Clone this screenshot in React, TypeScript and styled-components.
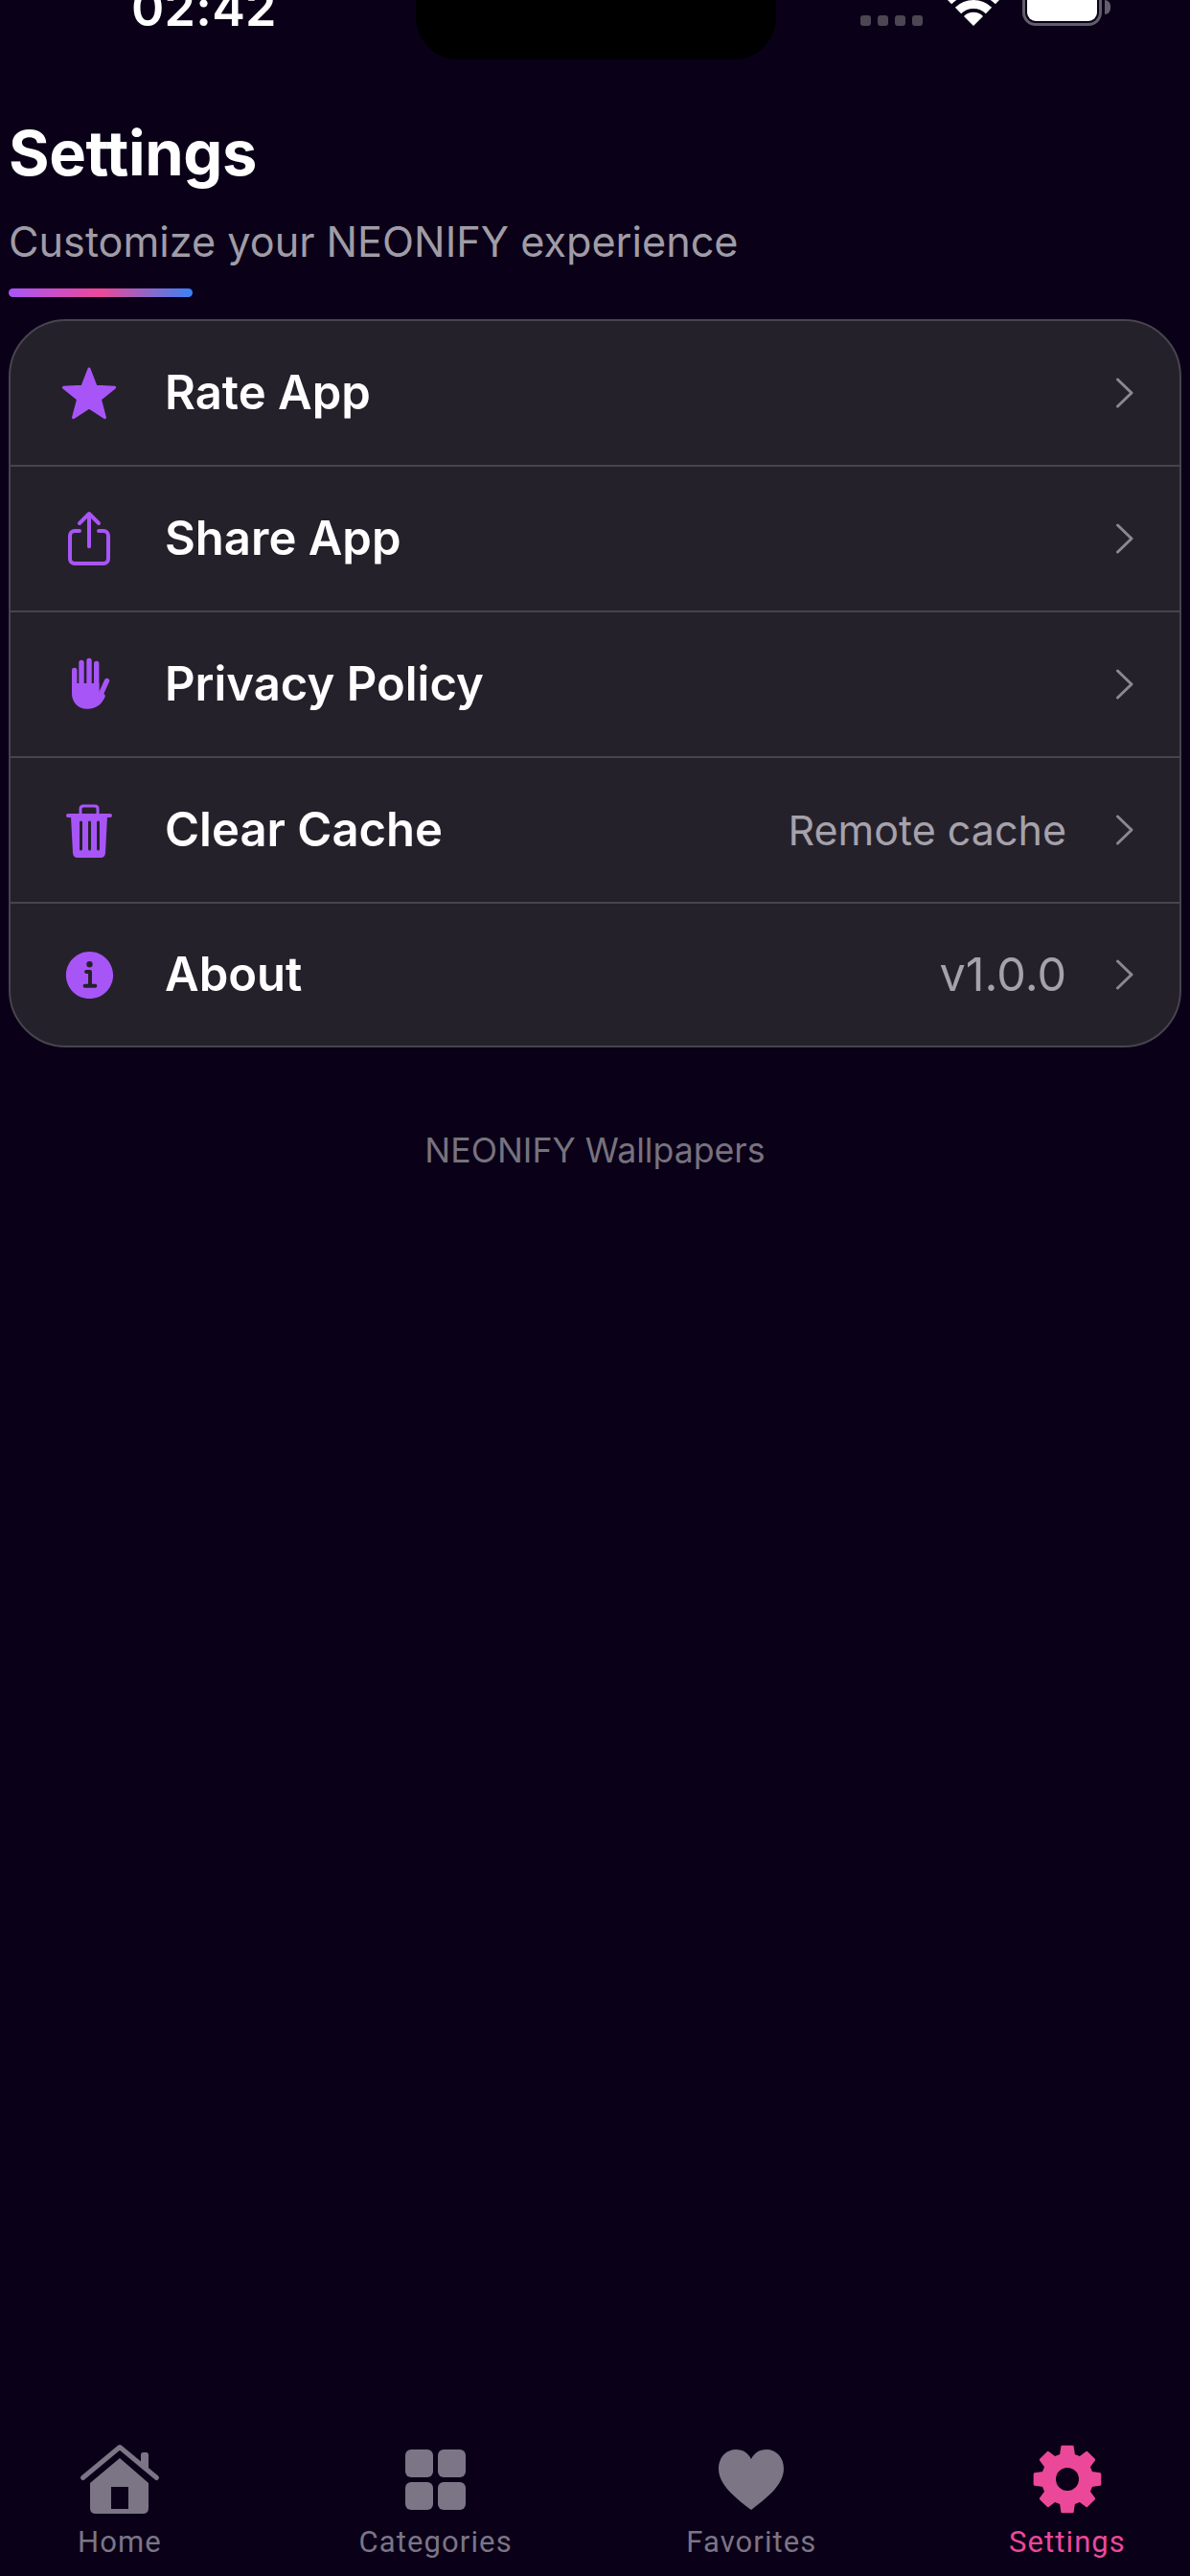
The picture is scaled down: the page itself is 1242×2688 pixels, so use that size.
import React from 'react'
import styled, { createGlobalStyle } from 'styled-components'
import { IoInformationCircle, IoShareOutline } from 'react-icons/io5'

const Colors = {
  BG: '#0a0018',
  CARD: '#25212b',
  LINE: '#47444e',
  PURPLE: '#a855f7',
  PINK: '#ec4899',
  MUTED: '#7b7585',
  VALUE: '#a5a2ab'
}

const GlobalStyle = createGlobalStyle`
  html, body {
    margin: 0;
    padding: 0;
    background: ${Colors.BG};
  }
  * {
    box-sizing: border-box;
  }
`

const Page = styled.div`
  position: relative;
  width: 1242px;
  height: 2688px;
  overflow: hidden;
  display: flex;
  flex-direction: column;
  background: ${Colors.BG};
  font-family: Inter, 'Liberation Sans', sans-serif;
  color: #fff;
`

const StatusBar = styled.div`
  height: 27px;
  display: flex;
  align-items: flex-end;
  padding-left: 137px;
`

const Time = styled.span`
  font-size: 52px;
  font-weight: 600;
  line-height: 36px;
  width: 761px;
  flex: none;
  letter-spacing: 0.3px;
`

const Dots = styled.div`
  display: flex;
  gap: 7px;
  width: 90px;
  flex: none;
`

const Dot = styled.i`
  display: block;
  width: 11px;
  height: 11px;
  border-radius: 3px;
  background: #4b4652;
`

const Wifi = styled.svg`
  display: block;
  flex: none;
  width: 56px;
  height: 56px;
  margin-right: 23px;
`

const Battery = styled.div`
  position: relative;
  flex: none;
  width: 83px;
  height: 60px;
  border: 3px solid #625d6a;
  border-radius: 14px;
  padding: 2px;
  &::before {
    content: '';
    display: block;
    height: 100%;
    background: #fff;
    border-radius: 9px;
  }
  &::after {
    content: '';
    position: absolute;
    right: -12px;
    top: 30px;
    width: 6px;
    height: 15px;
    border-radius: 0 6px 6px 0;
    background: #625d6a;
  }
`

const Notch = styled.div`
  position: absolute;
  left: 434px;
  top: -20px;
  width: 376px;
  height: 82px;
  background: #000;
  border-radius: 0 0 44px 44px;
`

const Main = styled.main`
  flex: 1;
  padding: 97px 9px 0;
`

const Title = styled.h1`
  margin: 0;
  font-size: 65px;
  line-height: 72px;
  font-weight: 700;
  letter-spacing: -0.4px;
`

const Subtitle = styled.p`
  margin: 30px 0 0;
  font-size: 43.2px;
  line-height: 52px;
  font-weight: 400;
  color: #a09ca6;
`

const Accent = styled.div`
  width: 192px;
  height: 9px;
  margin-top: 23px;
  border-radius: 5px;
  background: linear-gradient(90deg, #a855f7 0%, #ec4899 50%, #3b82f6 100%);
`

const Card = styled.section`
  margin-top: 23px;
  border: 2px solid ${Colors.LINE};
  border-radius: 60px;
  background: ${Colors.CARD};
  overflow: hidden;
`

const Row = styled.div`
  height: 152px;
  display: flex;
  align-items: center;
  padding: 0 47px 0 52px;
  border-bottom: 2px solid ${Colors.LINE};
  &:last-child {
    height: 148px;
    border-bottom: 0;
  }
`

const IconSlot = styled.div`
  width: 60px;
  flex: none;
  display: flex;
  justify-content: center;
  color: ${Colors.PURPLE};
  margin-right: 49px;
  svg {
    flex: none;
  }
`

const Label = styled.span`
  flex: 1;
  font-size: 49px;
  font-weight: 600;
  line-height: 60px;
`

const Value = styled.span<{ $big?: boolean }>`
  font-size: ${(p) => (p.$big ? 48.5 : 43)}px;
  line-height: 54px;
  color: ${Colors.VALUE};
  margin-right: 51px;
`

const Chevron = styled.svg`
  display: block;
  flex: none;
  width: 20px;
  height: 32px;
`

const Footer = styled.p`
  margin: 85px 0 0;
  text-align: center;
  font-size: 35.7px;
  line-height: 44px;
  color: #77727e;
`

const TabBar = styled.nav`
  display: flex;
  justify-content: space-between;
  padding: 0 3px 17px 0;
`

const Tab = styled.div<{ $active?: boolean }>`
  width: 250px;
  display: flex;
  flex-direction: column;
  align-items: center;
  color: ${(p) => (p.$active ? Colors.PINK : Colors.MUTED)};
`

const TabIcon = styled.div`
  height: 76px;
  display: flex;
  align-items: center;
  justify-content: center;
`

const TabLabel = styled.span`
  margin-top: 10px;
  font-family: Roboto, 'Liberation Sans', sans-serif;
  font-size: 31px;
  line-height: 36px;
  letter-spacing: 1.1px;
`

const polar = (r: number, deg: number, c: number) => {
  const a = ((deg - 90) * Math.PI) / 180
  return `${(c + r * Math.cos(a)).toFixed(2)} ${(c + r * Math.sin(a)).toFixed(2)}`
}

const starPath = () => {
  const pts: string[] = []
  for (let i = 0; i < 5; i++) {
    pts.push(polar(28, i * 72, 30))
    pts.push(polar(12, i * 72 + 36, 30))
  }
  return `M${pts.join(' L')} Z`
}

const gearPath = () => {
  const pts: string[] = []
  for (let i = 0; i < 8; i++) {
    const a = i * 45
    pts.push(polar(26, a - 15, 36))
    pts.push(polar(34.5, a - 9, 36))
    pts.push(polar(34.5, a + 9, 36))
    pts.push(polar(26, a + 15, 36))
  }
  return `M${pts.join(' L')} Z`
}

const StarIcon = () => (
  <svg width="60" height="60" viewBox="0 0 60 60" fill="currentColor">
    <path
      d={starPath()}
      transform="translate(0 3)"
      stroke="currentColor"
      strokeWidth="3"
      strokeLinejoin="round"
    />
  </svg>
)

const HandIcon = () => (
  <svg width="66" height="70" viewBox="0 0 66 70" fill="currentColor">
    <g stroke="currentColor" strokeWidth="5.4" strokeLinecap="round" fill="none">
      <path d="M17.7 20.5 V42" />
      <path d="M25 12.5 V36" />
      <path d="M33 10.5 V36" />
      <path d="M40.7 13.5 V42" />
      <path d="M51.5 31.5 L44 48" />
    </g>
    <path d="M15 34 H43.4 V44 L46 42 L50 47 C47 55 41 60.8 31 60.8 C21 60.8 15 53 15 45 Z" />
  </svg>
)

const TrashIcon = () => (
  <svg width="66" height="70" viewBox="0 0 66 70" fill="currentColor">
    <path
      d="M24 18 V13 Q24 10 27 10 H39 Q42 10 42 13 V18"
      fill="none"
      stroke="currentColor"
      strokeWidth="3"
    />
    <rect x="9" y="18" width="48" height="4" rx="2" />
    <path
      fillRule="evenodd"
      d="M14 21 H52 L50 59 Q49.7 64 45 64 H21 Q16.3 64 16 59 Z
         M23 27 V55 A1.5 1.5 0 0 0 26 55 V27 A1.5 1.5 0 0 0 23 27 Z
         M32 27 V55 A1.5 1.5 0 0 0 35 55 V27 A1.5 1.5 0 0 0 32 27 Z
         M41 27 V55 A1.5 1.5 0 0 0 44 55 V27 A1.5 1.5 0 0 0 41 27 Z"
    />
  </svg>
)

const HomeIcon = () => (
  <svg width="100" height="90" viewBox="0 0 100 90" fill="currentColor">
    <path d="M72 28 V19.5 Q72 17 74.5 17 H77.5 Q80 17 80 19.5 V35 Z" />
    <path
      d="M11.5 43.5 L50 11.5 L88.5 43.5"
      fill="none"
      stroke="currentColor"
      strokeWidth="5"
      strokeLinecap="round"
      strokeLinejoin="round"
    />
    <path
      fillRule="evenodd"
      d="M50 23 L80 49 V75 Q80 81 74 81 H25 Q19 81 19 75 V49 Z
         M41 53 V76 H59 V53 Z"
    />
  </svg>
)

const GridIcon = () => (
  <svg width="63" height="63" viewBox="0 0 63 63" fill="currentColor">
    <rect x="0" y="0" width="29" height="29" rx="6" />
    <rect x="34" y="0" width="29" height="29" rx="6" />
    <rect x="0" y="34" width="29" height="29" rx="6" />
    <rect x="34" y="34" width="29" height="29" rx="6" />
  </svg>
)

const HeartIcon = () => (
  <svg width="68" height="63" viewBox="0 0 68 63" fill="currentColor">
    <path d="M34 63 C20 52 0 38 0 20 C0 8 8 0 18 0 C26 0 31 4 34 10 C37 4 42 0 50 0 C60 0 68 8 68 20 C68 38 48 52 34 63 Z" />
  </svg>
)

const GearIcon = () => (
  <svg width="72" height="72" viewBox="0 0 72 72">
    <path
      fill="currentColor"
      stroke="currentColor"
      strokeWidth="2.5"
      strokeLinejoin="round"
      d={gearPath()}
    />
    <circle cx="36" cy="36" r="12" fill={Colors.BG} />
  </svg>
)

const rows = [
  { label: 'Rate App', icon: <StarIcon /> },
  { label: 'Share App', icon: <IoShareOutline size={64} /> },
  { label: 'Privacy Policy', icon: <HandIcon /> },
  { label: 'Clear Cache', value: 'Remote cache', icon: <TrashIcon /> },
  { label: 'About', value: 'v1.0.0', big: true, icon: <IoInformationCircle size={63} /> }
]

const tabs = [
  { label: 'Home', icon: <HomeIcon /> },
  { label: 'Categories', icon: <GridIcon /> },
  { label: 'Favorites', icon: <HeartIcon /> },
  { label: 'Settings', icon: <GearIcon />, active: true }
]

const App = () => {
  return (
    <Page>
      <GlobalStyle />
      <StatusBar>
        <Time>02:42</Time>
        <Dots>
          {[0, 1, 2, 3].map((i) => (
            <Dot key={i} />
          ))}
        </Dots>
        <Wifi viewBox="0 0 56 56" fill="none">
          <path d="M18 46 L28 56 L38 46 A14 14 0 0 0 18 46 Z" fill="#fff" />
          <path d="M12 40 A23 23 0 0 1 44 40" stroke="#fff" strokeWidth="9" />
          <path d="M2 30 A37 37 0 0 1 54 30" stroke="#fff" strokeWidth="9" />
        </Wifi>
        <Battery />
      </StatusBar>
      <Notch />
      <Main>
        <Title>Settings</Title>
        <Subtitle>Customize your NEONIFY experience</Subtitle>
        <Accent />
        <Card>
          {rows.map((row) => (
            <Row key={row.label}>
              <IconSlot>{row.icon}</IconSlot>
              <Label>{row.label}</Label>
              {row.value && <Value $big={row.big}>{row.value}</Value>}
              <Chevron viewBox="0 0 20 32" fill="none">
                <path
                  d="M2.5 2 L17 16 L2.5 30"
                  stroke="#8b8890"
                  strokeWidth="3"
                  strokeLinecap="round"
                  strokeLinejoin="round"
                />
              </Chevron>
            </Row>
          ))}
        </Card>
        <Footer>NEONIFY Wallpapers</Footer>
      </Main>
      <TabBar>
        {tabs.map((tab) => (
          <Tab key={tab.label} $active={tab.active}>
            <TabIcon>{tab.icon}</TabIcon>
            <TabLabel>{tab.label}</TabLabel>
          </Tab>
        ))}
      </TabBar>
    </Page>
  )
}

export default App
